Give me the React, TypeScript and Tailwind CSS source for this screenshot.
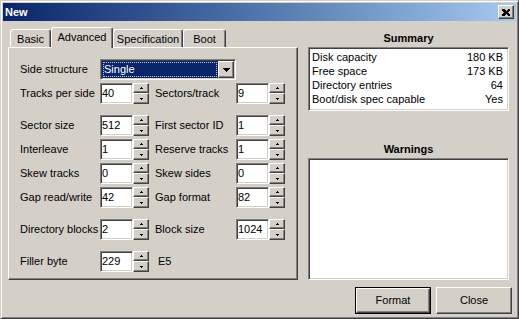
import type { ReactNode } from 'react'

// classic 3D bevels
const raised =
  'border border-t-white border-l-white border-r-[#404040] border-b-[#404040] shadow-[inset_-1px_-1px_0_#808080]'
const sunken =
  'border border-t-[#808080] border-l-[#808080] border-r-white border-b-white shadow-[inset_1px_1px_0_#404040,inset_-1px_-1px_0_#d4d0c8]'

function Arrow({ up }: { up?: boolean }) {
  return (
    <svg width="3" height="2" shapeRendering="crispEdges">
      {up ? (
        <>
          <rect x="1" y="0" width="1" height="1" fill="#000" />
          <rect x="0" y="1" width="3" height="1" fill="#000" />
        </>
      ) : (
        <>
          <rect x="0" y="0" width="3" height="1" fill="#000" />
          <rect x="1" y="1" width="1" height="1" fill="#000" />
        </>
      )}
    </svg>
  )
}

function Spin() {
  return (
    <div className="flex h-[21px] w-[16px] flex-col">
      <div className={`${raised} flex h-[10px] items-center justify-center bg-[#d4d0c8]`}>
        <Arrow up />
      </div>
      <div className={`${raised} flex h-[11px] items-center justify-center bg-[#d4d0c8]`}>
        <Arrow />
      </div>
    </div>
  )
}

function Field({ value }: { value: string }) {
  return (
    <div className={`${sunken} flex h-[21px] w-[33px] items-center bg-white pl-px`}>{value}</div>
  )
}

function Row({
  l1,
  v1,
  l2,
  v2,
  className = '',
}: {
  l1: string
  v1: string
  l2?: string
  v2?: string
  className?: string
}) {
  return (
    <div className={`flex h-[21px] items-center ${className}`}>
      <span className="w-[80px] whitespace-nowrap">{l1}</span>
      <Field value={v1} />
      <Spin />
      {v2 ? (
        <>
          <span className="ml-[6px] w-[81px] whitespace-nowrap">{l2}</span>
          <Field value={v2} />
          <Spin />
        </>
      ) : (
        <span className="ml-[9px]">{l2}</span>
      )}
    </div>
  )
}

function Tab({ label, active, w }: { label: string; active?: boolean; w: string }) {
  return (
    <div
      className={`flex items-start justify-center rounded-t-[3px] border-l border-t border-r border-l-white border-t-white border-r-[#404040] bg-[#d4d0c8] shadow-[inset_-1px_0_0_#808080] ${w} ${
        active ? 'relative z-10 -mb-px h-[21px] pt-[3px]' : 'h-[18px] pt-[3px]'
      }`}
    >
      {label}
    </div>
  )
}

function Btn({ children, def }: { children: ReactNode; def?: boolean }) {
  if (def)
    return (
      <div className="h-[27px] w-[76px] border border-black">
        <div className={`${raised} flex h-full items-center justify-center`}>{children}</div>
      </div>
    )
  return (
    <div className={`${raised} flex h-[27px] w-[76px] items-center justify-center`}>{children}</div>
  )
}

const summary = [
  ['Disk capacity', '180 KB'],
  ['Free space', '173 KB'],
  ['Directory entries', '64'],
  ['Boot/disk spec capable', 'Yes'],
]

export default function App() {
  return (
    <div className="h-[319px] w-[519px] bg-[#d4d0c8] font-['Liberation_Sans',Arial,sans-serif] text-[11px] leading-[13px] text-black">
      <div className="flex h-full flex-col border border-t-[#d4d0c8] border-l-[#d4d0c8] border-r-[#404040] border-b-[#404040] p-[2px] shadow-[inset_1px_1px_0_#fff,inset_-1px_-1px_0_#808080]">
        {/* title bar */}
        <div className="flex h-[18px] shrink-0 items-center justify-between bg-linear-to-r from-[#0a246a] to-[#a6caf0] pl-[2px] pr-[2px]">
          <span className="font-bold text-white">New</span>
          <div className={`${raised} flex h-[14px] w-[16px] items-center justify-center bg-[#d4d0c8]`}>
            <svg width="8" height="7" shapeRendering="crispEdges">
              <path d="M0 0h2l2 2 2-2h2v1l-2 2.5 2 2.5v1h-2l-2-2-2 2h-2v-1l2-2.5-2-2.5z" fill="#000" />
            </svg>
          </div>
        </div>

        <div className="flex flex-1 flex-col px-[5px]">
          <div className="flex gap-[10px]">
            {/* tab control */}
            <div className="mt-[6px] w-[290px]">
              <div className="flex h-[20px] items-end pl-[2px]">
                <Tab label="Basic" w="w-[41px]" />
                <Tab label="Advanced" w="w-[62px]" active />
                <Tab label="Specification" w="w-[70px]" />
                <Tab label="Boot" w="w-[43px]" />
              </div>
              <div className="h-[233px] border border-t-white border-l-white border-r-[#404040] border-b-[#404040] pl-[11px] pt-[11px] shadow-[inset_-1px_-1px_0_#808080]">
                <div className="flex h-[21px] items-center">
                  <span className="w-[80px]">Side structure</span>
                  <div className={`${sunken} flex h-[21px] w-[136px] bg-white p-px`}>
                    <div className="flex flex-1 items-center bg-[#0a246a] p-px">
                      <div className="flex h-full flex-1 items-center border border-dotted border-[#c8c8e0] text-white">
                        Single
                      </div>
                    </div>
                    <div className={`${raised} flex w-[16px] items-center justify-center bg-[#d4d0c8]`}>
                      <svg width="7" height="4" shapeRendering="crispEdges">
                        <path d="M0 0h7l-3.5 4z" fill="#000" />
                      </svg>
                    </div>
                  </div>
                </div>
                <Row className="mt-[3px]" l1="Tracks per side" v1="40" l2="Sectors/track" v2="9" />
                <Row className="mt-[11px]" l1="Sector size" v1="512" l2="First sector ID" v2="1" />
                <Row className="mt-[3px]" l1="Interleave" v1="1" l2="Reserve tracks" v2="1" />
                <Row className="mt-[3px]" l1="Skew tracks" v1="0" l2="Skew sides" v2="0" />
                <Row className="mt-[3px]" l1="Gap read/write" v1="42" l2="Gap format" v2="82" />
                <Row className="mt-[11px]" l1="Directory blocks" v1="2" l2="Block size" v2="1024" />
                <Row className="mt-[11px]" l1="Filler byte" v1="229" l2="E5" />
              </div>
            </div>

            {/* summary + warnings */}
            <div className="mt-[10px] flex w-[201px] flex-col">
              <div className="h-[14px] text-center font-bold leading-[14px]">Summary</div>
              <div className={`${sunken} mt-[2px] h-[64px] bg-white pl-[3px] pr-[5px] pt-[2px]`}>
                {summary.map(([k, v]) => (
                  <div key={k} className="flex h-[14px] items-center justify-between">
                    <span>{k}</span>
                    <span>{v}</span>
                  </div>
                ))}
              </div>
              <div className="mt-[31px] h-[14px] text-center font-bold leading-[14px]">Warnings</div>
              <div className={`${sunken} mt-[2px] h-[122px] bg-white`} />
            </div>
          </div>

          <div className="mr-[-1px] mt-[7px] flex justify-end gap-[5px]">
            <Btn def>Format</Btn>
            <Btn>Close</Btn>
          </div>
        </div>
      </div>
    </div>
  )
}
